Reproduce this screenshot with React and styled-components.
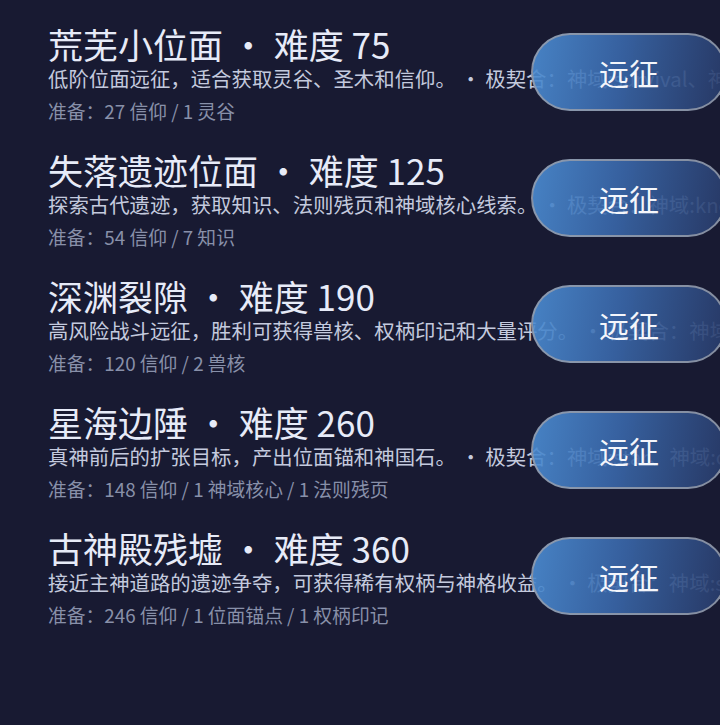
import React from "react";
import styled, { createGlobalStyle } from "styled-components";

const Global = createGlobalStyle`
  html, body {
    margin: 0;
    padding: 0;
    background: #181a32;
    overflow: hidden;
  }
  body {
    font-family: "Noto Sans CJK SC", "Noto Sans", sans-serif;
  }
`;

const Page = styled.div`
  width: 720px;
  height: 725px;
  background: #181a32;
  padding: 24px 0 0 48px;
  box-sizing: border-box;
  overflow: hidden;
`;

const Row = styled.div`
  display: flex;
  align-items: flex-start;
  height: 126px;
  margin-right: -7px;
`;

const Info = styled.div`
  flex: 1;
  min-width: 0;
  white-space: nowrap;
`;

const Title = styled.div`
  font-size: 35px;
  line-height: 40px;
  color: #e7ebf8;
`;

const Desc = styled.div`
  font-size: 20.4px;
  line-height: 28px;
  color: #c4cade;
`;

const Prep = styled.div`
  margin-top: 6px;
  font-size: 18.8px;
  line-height: 26px;
  color: #8890a9;
`;

const Go = styled.button`
  position: relative;
  flex-shrink: 0;
  width: 196px;
  height: 78px;
  margin-top: 9px;
  border-radius: 40px;
  border: 2px solid rgba(150, 158, 172, 0.85);
  background: linear-gradient(100deg, rgba(76, 142, 212, 0.9) 0%, rgba(58, 104, 170, 0.9) 45%, rgba(40, 58, 104, 0.92) 100%);
  color: #f4f6fb;
  font-family: "Noto Sans CJK SC", "Noto Sans", sans-serif;
  font-size: 30px;
  padding: 0;
  box-sizing: border-box;
  cursor: pointer;
`;

const items = [
  {
    name: "荒芜小位面",
    level: 75,
    desc: "低阶位面远征，适合获取灵谷、圣木和信仰。 ・ 极契合：神域:survival、神域:harvest",
    prep: "准备：27 信仰 / 1 灵谷",
  },
  {
    name: "失落遗迹位面",
    level: 125,
    desc: "探索古代遗迹，获取知识、法则残页和神域核心线索。 ・ 极契合：神域:knowledge",
    prep: "准备：54 信仰 / 7 知识",
  },
  {
    name: "深渊裂隙",
    level: 190,
    desc: "高风险战斗远征，胜利可获得兽核、权柄印记和大量评分。 ・ 极契合：神域:war",
    prep: "准备：120 信仰 / 2 兽核",
  },
  {
    name: "星海边陲",
    level: 260,
    desc: "真神前后的扩张目标，产出位面锚和神国石。 ・ 极契合：神域:star、神域:order",
    prep: "准备：148 信仰 / 1 神域核心 / 1 法则残页",
  },
  {
    name: "古神殿残墟",
    level: 360,
    desc: "接近主神道路的遗迹争夺，可获得稀有权柄与神格收益。 ・ 极契合：神域:storm",
    prep: "准备：246 信仰 / 1 位面锚点 / 1 权柄印记",
  },
];

export default function App() {
  return (
    <>
      <Global />
      <Page>
        {items.map((it) => (
          <Row key={it.name}>
            <Info>
              <Title>{it.name} ・ 难度 {it.level}</Title>
              <Desc>{it.desc}</Desc>
              <Prep>{it.prep}</Prep>
            </Info>
            <Go>远征</Go>
          </Row>
        ))}
      </Page>
    </>
  );
}
